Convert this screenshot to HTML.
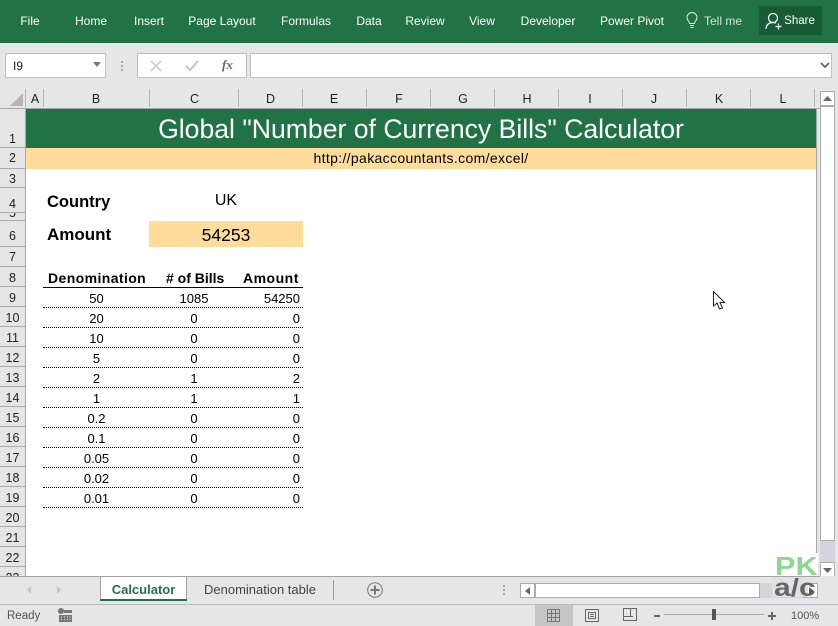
<!DOCTYPE html>
<html><head><meta charset="utf-8"><style>
html,body{margin:0;padding:0}
body{width:838px;height:626px;overflow:hidden;position:relative;background:#fff;font-family:"Liberation Sans",sans-serif;color:#000}
div,span.a{position:absolute}
.r{top:14px;font-size:12px;line-height:14px;color:#fff;white-space:nowrap;transform:translateX(-50%)}
.ch{top:90px;height:18px;font-size:12.5px;line-height:18px;text-align:center;color:#222}
.cs{top:89px;width:1px;height:18px;background:#b5b5b5}
.rh{left:0;width:25px;background:#e6e6e6;border-bottom:1px solid #ababab;box-sizing:border-box;font-size:12.5px;text-align:center;color:#222;overflow:hidden}
.c{font-size:13px;line-height:20px;height:20px;white-space:nowrap;margin-top:1px}
.b{left:43px;width:107px;text-align:center}
.cc{left:149px;width:90px;text-align:center}
.d{left:238px;width:62px;text-align:right}
.dl{left:43px;width:260px;height:0;border-top:1px dotted #000}
</style></head><body>
<div style="left:0;top:0;width:838px;height:43px;background:#217346"></div>
<div class="r" style="left:30px">File</div>
<div class="r" style="left:91px">Home</div>
<div class="r" style="left:149px">Insert</div>
<div class="r" style="left:222px">Page Layout</div>
<div class="r" style="left:306px">Formulas</div>
<div class="r" style="left:369px">Data</div>
<div class="r" style="left:425px">Review</div>
<div class="r" style="left:482px">View</div>
<div class="r" style="left:548px">Developer</div>
<div class="r" style="left:632px">Power Pivot</div>
<svg style="position:absolute;left:685px;top:12px" width="14" height="17" viewBox="0 0 14 17" fill="none" stroke="#dfe9e3" stroke-width="1"><path d="M4.500 11.500C4.500 9 2 8.500 2 5.500a5 5 0 0 1 10 0c0 3-2.500 3.500-2.500 6zM5 13.500h4M5.500 15.500h3"/></svg>
<div class="r" style="left:723px;color:#d3e3da">Tell me</div>
<div style="left:759px;top:6px;width:63px;height:29px;background:#185c37"></div>
<svg style="position:absolute;left:765px;top:12px" width="18" height="19" viewBox="0 0 18 19" fill="none" stroke="#fff" stroke-width="1.200"><circle cx="8" cy="6" r="4.500"/><path d="M1 17c0-4 3-6.500 7-6.500 1 0 2 .2 3 .6M10.500 14.500h6M13.500 11.500v6"/></svg>
<div class="r" style="left:799.500px;font-size:11.500px">Share</div>

<div style="left:0;top:43px;width:838px;height:533px;background:#e6e6e6"></div>
<div style="left:5px;top:53px;width:101px;height:25px;box-sizing:border-box;background:#fff;border:1px solid #c0c0c0"></div>
<div style="left:13px;top:59px;font-size:12px;line-height:14px;color:#222">I9</div>
<svg style="position:absolute;left:92px;top:62px" width="10" height="6"><path d="M1 0h8L5 5z" fill="#777"/></svg>
<div style="left:121px;top:61px;width:2px;height:2px;background:#aaa"></div>
<div style="left:121px;top:65px;width:2px;height:2px;background:#aaa"></div>
<div style="left:121px;top:69px;width:2px;height:2px;background:#aaa"></div>
<div style="left:137px;top:53px;width:110px;height:25px;box-sizing:border-box;background:#fff;border:1px solid #c0c0c0"></div>
<svg style="position:absolute;left:149px;top:60px" width="14" height="12" fill="none" stroke="#c6c6c6" stroke-width="1.500"><path d="M2 1l10 10M12 1L2 11"/></svg>
<svg style="position:absolute;left:185px;top:60px" width="15" height="12" fill="none" stroke="#c6c6c6" stroke-width="2"><path d="M1 6l4 4 8-9"/></svg>
<div style="left:222px;top:57px;font:italic bold 13px 'Liberation Serif',serif;color:#666">fx</div>
<div style="left:250px;top:53px;width:582px;height:25px;box-sizing:border-box;background:#fff;border:1px solid #c0c0c0"></div>
<svg style="position:absolute;left:820px;top:62px" width="10" height="7" fill="none" stroke="#666" stroke-width="1.800"><path d="M1 1l4 4 4-4"/></svg>

<svg style="position:absolute;left:10px;top:93px" width="13" height="13"><path d="M13 0v13H0z" fill="#b4b4b4"/></svg>
<div style="left:0;top:108px;width:820px;height:1px;background:#a6a6a6"></div>
<div class="cs" style="left:25px"></div><div class="cs" style="left:43px"></div><div class="cs" style="left:149px"></div><div class="cs" style="left:238px"></div><div class="cs" style="left:302px"></div><div class="cs" style="left:366px"></div><div class="cs" style="left:430px"></div><div class="cs" style="left:494px"></div><div class="cs" style="left:558px"></div><div class="cs" style="left:622px"></div><div class="cs" style="left:686px"></div><div class="cs" style="left:750px"></div><div class="cs" style="left:814px"></div>
<div class="ch" style="left:26px;width:18px">A</div>
<div class="ch" style="left:43px;width:106px">B</div>
<div class="ch" style="left:150px;width:89px">C</div>
<div class="ch" style="left:238px;width:65px">D</div>
<div class="ch" style="left:302px;width:64px">E</div>
<div class="ch" style="left:367px;width:64px">F</div>
<div class="ch" style="left:431px;width:64px">G</div>
<div class="ch" style="left:495px;width:64px">H</div>
<div class="ch" style="left:558px;width:64px">I</div>
<div class="ch" style="left:622px;width:64px">J</div>
<div class="ch" style="left:687px;width:64px">K</div>
<div class="ch" style="left:751px;width:64px">L</div>

<div style="left:25px;top:109px;width:791px;height:467px;background:#fff"></div>
<div style="left:816px;top:109px;width:1px;height:467px;background:#a6a6a6"></div>
<div style="left:25px;top:109px;width:1px;height:467px;background:#a6a6a6"></div>

<div class="rh" style="top:109px;height:39px;line-height:60px">1</div>
<div class="rh" style="top:148px;height:21px;line-height:21px">2</div>
<div class="rh" style="top:169px;height:19px;line-height:21px">3</div>
<div class="rh" style="top:188px;height:25px;line-height:32px">4</div>
<div class="rh" style="top:213px;height:8px;line-height:0px">5</div>
<div class="rh" style="top:221px;height:26px;line-height:31px">6</div>
<div class="rh" style="top:247px;height:20px;line-height:21px">7</div>
<div class="rh" style="top:267px;height:20px;line-height:22px">8</div>
<div class="rh" style="top:287px;height:20px;line-height:22px">9</div>
<div class="rh" style="top:307px;height:20px;line-height:22px">10</div>
<div class="rh" style="top:327px;height:20px;line-height:22px">11</div>
<div class="rh" style="top:347px;height:20px;line-height:22px">12</div>
<div class="rh" style="top:367px;height:20px;line-height:22px">13</div>
<div class="rh" style="top:387px;height:20px;line-height:22px">14</div>
<div class="rh" style="top:407px;height:20px;line-height:22px">15</div>
<div class="rh" style="top:427px;height:20px;line-height:22px">16</div>
<div class="rh" style="top:447px;height:20px;line-height:22px">17</div>
<div class="rh" style="top:467px;height:20px;line-height:22px">18</div>
<div class="rh" style="top:487px;height:20px;line-height:22px">19</div>
<div class="rh" style="top:507px;height:20px;line-height:22px">20</div>
<div class="rh" style="top:527px;height:20px;line-height:22px">21</div>
<div class="rh" style="top:547px;height:20px;line-height:22px">22</div>
<div class="rh" style="top:567px;height:9px;line-height:22px;border-bottom:0">23</div>

<div style="left:26px;top:109px;width:790px;height:39px;background:#217346;color:#fff;font-size:26.600px;line-height:41px;text-align:center">Global "Number of Currency Bills" Calculator</div>
<div style="left:26px;top:148px;width:790px;height:21px;background:#ffdc9b;font-size:14px;letter-spacing:.35px;line-height:21px;text-align:center">http://pakaccountants.com/excel/</div>

<div style="left:47px;top:192px;font-size:16.500px;line-height:20px;font-weight:bold">Country</div>
<div style="left:149px;top:191px;width:154px;text-align:center;font-size:16px;line-height:20px">UK</div>
<div style="left:47px;top:225px;font-size:17px;line-height:20px;font-weight:bold">Amount</div>
<div style="left:149px;top:221px;width:154px;height:26px;background:#ffdc9b;text-align:center;font-size:17.500px;line-height:28px">54253</div>

<div class="c" style="left:48px;top:267px;font-size:14px;letter-spacing:.4px;font-weight:bold">Denomination</div>
<div class="c" style="left:166px;top:267px;font-size:14px;font-weight:bold">&#35; of Bills</div>
<div class="c" style="left:243px;top:267px;font-size:14px;letter-spacing:.5px;font-weight:bold">Amount</div>
<div style="left:43px;top:287px;width:260px;height:1px;background:#000"></div>

<div class="c b" style="top:288px">50</div><div class="c cc" style="top:288px">1085</div><div class="c d" style="top:288px">54250</div><div class="dl" style="top:307px"></div>
<div class="c b" style="top:308px">20</div><div class="c cc" style="top:308px">0</div><div class="c d" style="top:308px">0</div><div class="dl" style="top:327px"></div>
<div class="c b" style="top:328px">10</div><div class="c cc" style="top:328px">0</div><div class="c d" style="top:328px">0</div><div class="dl" style="top:347px"></div>
<div class="c b" style="top:348px">5</div><div class="c cc" style="top:348px">0</div><div class="c d" style="top:348px">0</div><div class="dl" style="top:367px"></div>
<div class="c b" style="top:368px">2</div><div class="c cc" style="top:368px">1</div><div class="c d" style="top:368px">2</div><div class="dl" style="top:387px"></div>
<div class="c b" style="top:388px">1</div><div class="c cc" style="top:388px">1</div><div class="c d" style="top:388px">1</div><div class="dl" style="top:407px"></div>
<div class="c b" style="top:408px">0.2</div><div class="c cc" style="top:408px">0</div><div class="c d" style="top:408px">0</div><div class="dl" style="top:427px"></div>
<div class="c b" style="top:428px">0.1</div><div class="c cc" style="top:428px">0</div><div class="c d" style="top:428px">0</div><div class="dl" style="top:447px"></div>
<div class="c b" style="top:448px">0.05</div><div class="c cc" style="top:448px">0</div><div class="c d" style="top:448px">0</div><div class="dl" style="top:467px"></div>
<div class="c b" style="top:468px">0.02</div><div class="c cc" style="top:468px">0</div><div class="c d" style="top:468px">0</div><div class="dl" style="top:487px"></div>
<div class="c b" style="top:488px">0.01</div><div class="c cc" style="top:488px">0</div><div class="c d" style="top:488px">0</div><div class="dl" style="top:507px"></div>

<svg style="position:absolute;left:713px;top:291px" width="13" height="20" viewBox="0 0 13 20"><path d="M.5.500v14.500l3.500-3 2.500 6 3-1-2.500-5.500h4.500z" fill="#fff" stroke="#222" stroke-width="1"/></svg>

<div style="left:820px;top:91px;width:15px;height:15px;box-sizing:border-box;background:#fff;border:1px solid #ababab"></div>
<svg style="position:absolute;left:823px;top:96px" width="9" height="5"><path d="M0 5h9L4.500 0z" fill="#666"/></svg>
<div style="left:820px;top:106px;width:15px;height:435px;box-sizing:border-box;background:#fff;border:1px solid #ababab"></div>
<div style="left:820px;top:541px;width:15px;height:21px;background:#d4d4de"></div>
<div style="left:820px;top:562px;width:15px;height:15px;box-sizing:border-box;background:#fff;border:1px solid #ababab"></div>
<svg style="position:absolute;left:823px;top:568px" width="9" height="5"><path d="M0 0h9L4.500 5z" fill="#666"/></svg>

<div style="left:0;top:576px;width:838px;height:50px;background:#e6e6e6"></div>
<div style="left:0;top:576px;width:820px;height:1px;background:#a8a2a2"></div>
<div style="left:0;top:604px;width:838px;height:1px;background:#bcbcc4"></div>
<svg style="position:absolute;left:26px;top:585px" width="36" height="10"><path d="M5 1v8L1 5zM31 1v8l4-4z" fill="#c4c4c4"/></svg>
<div style="left:100px;top:576px;width:87px;height:25px;box-sizing:border-box;background:#fff;border:1px solid #a8a2a2;border-bottom:0"></div>
<div style="left:100px;top:599px;width:87px;height:2px;background:#217346"></div>
<div style="left:100px;top:582px;width:87px;text-align:center;font-size:13px;line-height:15px;font-weight:bold;color:#217346">Calculator</div>
<div style="left:187px;top:582px;width:146px;text-align:center;font-size:13px;line-height:15px;color:#444">Denomination table</div>
<div style="left:333px;top:580px;width:1px;height:20px;background:#999"></div>
<svg style="position:absolute;left:367px;top:582px" width="16" height="16" fill="none" stroke="#777"><circle cx="8" cy="8" r="7.300"/><path d="M8 3.500v9M3.500 8h9" stroke-width="2"/></svg>
<div style="left:503px;top:585px;width:2px;height:2px;background:#aaa"></div>
<div style="left:503px;top:589px;width:2px;height:2px;background:#aaa"></div>
<div style="left:503px;top:593px;width:2px;height:2px;background:#aaa"></div>
<div style="left:520px;top:583px;width:15px;height:15px;box-sizing:border-box;background:#fff;border:1px solid #ababab"></div>
<svg style="position:absolute;left:525px;top:587px" width="5" height="8"><path d="M5 0v8L0 4z" fill="#666"/></svg>
<div style="left:535px;top:583px;width:225px;height:15px;box-sizing:border-box;background:#fff;border:1px solid #ababab"></div>
<div style="left:760px;top:583px;width:43px;height:15px;background:#d4d4de"></div>
<div style="left:803px;top:583px;width:15px;height:15px;box-sizing:border-box;background:#fff;border:1px solid #ababab"></div>

<div style="left:772px;top:553px;width:46px;height:23px;background:#fff"></div>
<div style="left:772px;top:577px;width:36px;height:20px;background:#e2e2e6"></div>
<div style="left:775px;top:553px;font:bold 26px/26px 'Liberation Sans',sans-serif;color:#8fd694;transform:scaleX(1.180);transform-origin:0 0">PK</div>
<div style="left:774px;top:576px;font:bold 25px/24px 'Liberation Sans',sans-serif;color:#666;transform:scaleX(1.200);transform-origin:0 0">a/c</div>
<svg style="position:absolute;left:809px;top:587px" width="5" height="8"><path d="M0 0v8l5-4z" fill="#555"/></svg>

<div style="left:7px;top:609px;font-size:11.500px;line-height:14px;color:#555">Ready</div>
<svg style="position:absolute;left:58px;top:608px" width="14" height="14" fill="#777"><circle cx="3" cy="3" r="3"/><path d="M6 2h8v3H6zM1 7h13v7H1zM3 8.500v1h1v-1zM6 8.500v1h1v-1zM9 8.500v1h1v-1zM11.500 8.500v1h1v-1zM3 11v1h1v-1zM6 11v1h1v-1zM9 11v1h1v-1zM11.500 11v1h1v-1z" fill-rule="evenodd"/></svg>

<div style="left:535px;top:605px;width:38px;height:21px;background:#c6c6c6"></div>
<svg style="position:absolute;left:547px;top:609px" width="13" height="13" fill="none" stroke="#777"><path d="M.5.500h12v12H.5zM.5 4.500h12M.5 8.500h12M4.500.500v12M8.500.500v12"/></svg>
<svg style="position:absolute;left:585px;top:609px" width="14" height="13" fill="none" stroke="#666"><path d="M.5.500h13v12H.5zM3.500 3.500h7v6h-7zM5 5.500h4M5 7.500h4"/></svg>
<svg style="position:absolute;left:623px;top:608px" width="14" height="13" fill="none" stroke="#666"><path d="M.5.500h13v12H.5zM.5 8.500h9.500M7.500.500v8"/></svg>
<div style="left:654px;top:615px;width:6px;height:2px;background:#666"></div>
<div style="left:664px;top:614px;width:100px;height:1px;background:#aaa"></div>
<div style="left:712px;top:609px;width:4px;height:11px;background:#555"></div>
<div style="left:768px;top:615px;width:8px;height:2px;background:#666"></div>
<div style="left:771px;top:612px;width:2px;height:8px;background:#666"></div>
<div style="left:791px;top:609px;font-size:11px;line-height:14px;color:#555">100%</div>
</body></html>
